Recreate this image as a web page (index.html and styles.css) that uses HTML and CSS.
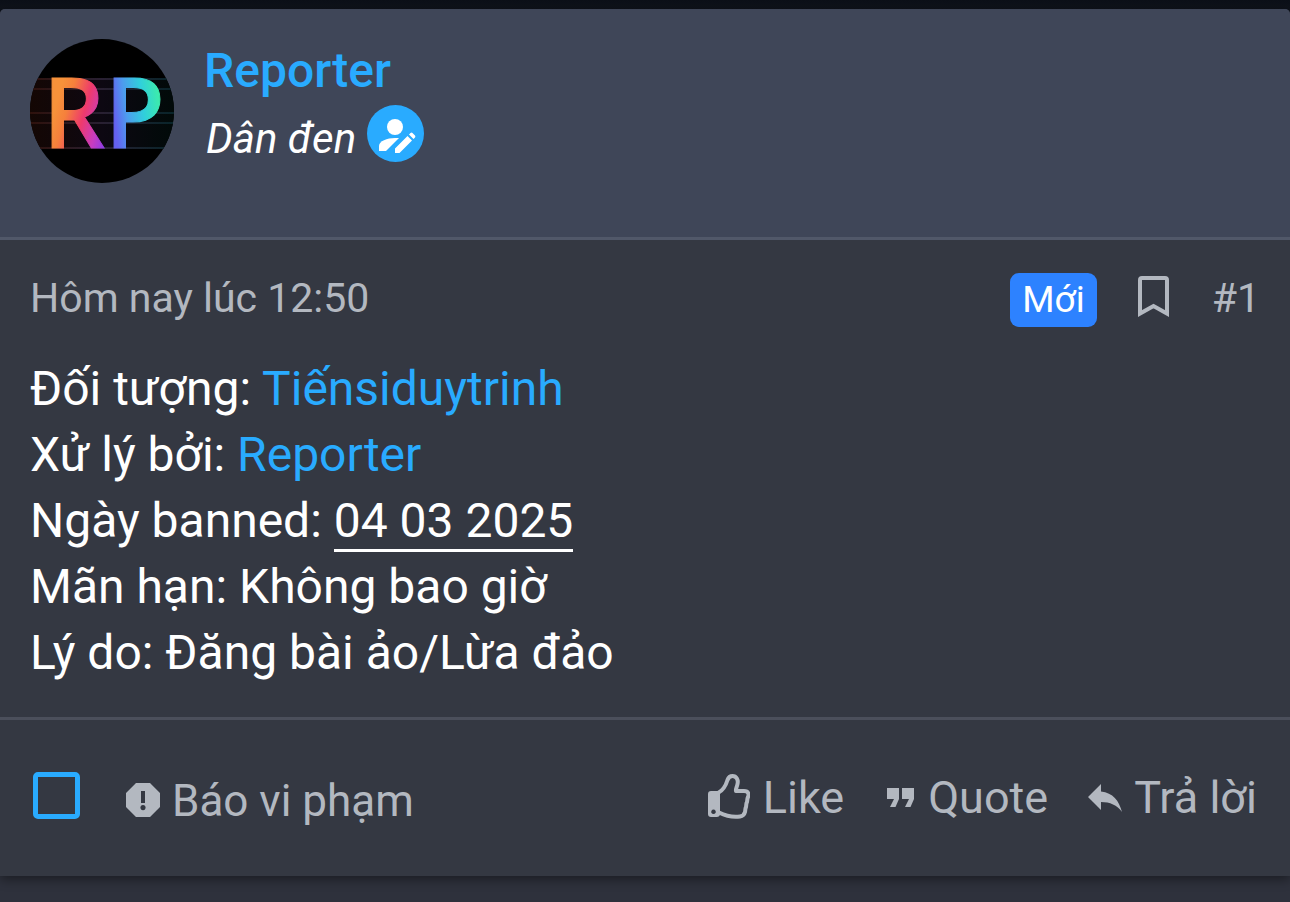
FILE: index.html
```html
<!DOCTYPE html>
<html lang="vi">
<head>
<meta charset="utf-8">
<meta name="viewport" content="width=device-width, initial-scale=1">
<title>Reporter</title>
<link rel="stylesheet" href="styles.css">
</head>
<body>
<main class="thread">
  <article class="post">
    <header class="post-user">
      <a class="avatar" href="#user" aria-label="Reporter">
        <svg viewBox="0 0 144 144" aria-hidden="true">
          <defs>
            <linearGradient id="warm" gradientUnits="userSpaceOnUse" x1="22" y1="80" x2="78" y2="96">
              <stop offset="0" stop-color="#f7923a"/>
              <stop offset=".2" stop-color="#f5803c"/>
              <stop offset=".5" stop-color="#ee3a6c"/>
              <stop offset=".78" stop-color="#c83cc0"/>
              <stop offset="1" stop-color="#8b3de8"/>
            </linearGradient>
            <linearGradient id="cool" gradientUnits="userSpaceOnUse" x1="84" y1="78" x2="130" y2="72">
              <stop offset="0" stop-color="#6461f0"/>
              <stop offset=".28" stop-color="#4d9cee"/>
              <stop offset=".65" stop-color="#30cfdc"/>
              <stop offset="1" stop-color="#3ceaae"/>
            </linearGradient>
            <linearGradient id="band">
              <stop offset="0" stop-color="#140704"/>
              <stop offset=".5" stop-color="#0d0812"/>
              <stop offset="1" stop-color="#010a09"/>
            </linearGradient>
            <linearGradient id="scan" gradientUnits="userSpaceOnUse" x1="0" y1="0" x2="144" y2="0">
              <stop offset="0" stop-color="#3a1610"/>
              <stop offset=".5" stop-color="#352a40"/>
              <stop offset="1" stop-color="#0b3038"/>
            </linearGradient>
          </defs>
          <rect width="144" height="144" fill="#000"/>
          <rect y="39" width="144" height="71" fill="url(#band)"/>
          <path d="M0 40h144M0 50h144M0 74h144M0 84h144M0 109h144" fill="none" stroke="url(#scan)" stroke-width="2" opacity=".7"/>
          <g class="avatar-letters">
            <text x="13" y="109" fill="url(#warm)" stroke="url(#warm)">R</text>
            <text x="75" y="109" fill="url(#cool)" stroke="url(#cool)">P</text>
          </g>
        </svg>
      </a>
      <div class="user-text">
        <h2 class="user-name"><a href="#user">Reporter</a></h2>
        <div class="user-title">
          <em>Dân đen</em>
          <svg class="role-icon" viewBox="0 0 57 57" role="img" aria-label="Thread starter">
            <circle cx="28.500" cy="28.500" r="28.500" fill="#29abff"/>
            <g fill="#fff">
              <circle cx="28" cy="22" r="8"/>
              <path d="M12 46v-5c0-5 8-8 16-8h4L19 46z"/>
              <path d="M28 48v-4.500l12.500-12.500 4.500 4.500L32.500 48zM42 29.500l1.500-1.500q1-.8 2 0l2.500 2.500q.8 1 0 2L46.500 34z"/>
            </g>
          </svg>
        </div>
      </div>
    </header>

    <div class="post-main">
      <div class="post-meta">
        <a class="post-time" href="#post-1"><time>Hôm nay lúc 12:50</time></a>
        <span class="badge">Mới</span>
        <button class="bookmark" type="button" aria-label="Bookmark">
          <svg viewBox="0 0 31 41" aria-hidden="true"><path d="M2 37.500V4q0-2 2-2h23q2 0 2 2v33.500L15.500 30z" fill="none" stroke="currentColor" stroke-width="4"/></svg>
        </button>
        <a class="post-number" href="#post-1">#1</a>
      </div>
      <div class="post-content">
        <p>Đối tượng: <a href="#target">Tiếnsiduytrinh</a></p>
        <p>Xử lý bởi: <a href="#user">Reporter</a></p>
        <p>Ngày banned: <span class="date">04 03 2025</span></p>
        <p>Mãn hạn: Không bao giờ</p>
        <p>Lý do: Đăng bài ảo/Lừa đảo</p>
      </div>
    </div>

    <footer class="post-footer">
      <input class="select-post" type="checkbox" aria-label="Select post">
      <a class="action report" href="#report">
        <svg class="icon-report" viewBox="0 0 34 34" aria-hidden="true"><path fill="currentColor" fill-rule="evenodd" d="M10 0h14l10 10v14L24 34H10L0 24V10zM15 8v12h4V8zM17 22a2.600 2.600 0 1 0 .01 0z"/></svg>
        Báo vi phạm
      </a>
      <nav class="actions" aria-label="Post actions">
        <a class="action like" href="#like">
          <svg class="icon-like" viewBox="0 0 42 45" aria-hidden="true">
            <path fill="currentColor" fill-rule="evenodd" d="M3 17h9V41q-1 2-3 2H3q-3 0-3-3V20q0-3 3-3zM5.500 35.500a2.300 2.300 0 1 0 .01 0z"/>
            <path fill="none" stroke="currentColor" stroke-width="4" stroke-linejoin="round" d="M10 19c6-3 8-8 9.500-13 1-3 3-4 5-4 4 0 6 4 5 8-.5 3-2 5-1.500 7h8c5 0 5 4 4 6-1 2-.5 3-1 5-1.200 2-.5 3-1 5-1 2-.5 3-1 5-.8 3-2 4-5 4.500-8 1.200-15-1-21-4"/>
          </svg>
          Like
        </a>
        <a class="action quote" href="#quote">
          <svg class="icon-quote" viewBox="0 0 27 19" aria-hidden="true"><path fill="currentColor" d="M0 0h12v11L8.500 19H3l4-8H0zM15 0h12v11l-3.500 8H18l4-8h-7z"/></svg>
          Quote
        </a>
        <a class="action reply" href="#reply">
          <svg class="icon-reply" viewBox="0 0 34 28" aria-hidden="true"><path fill="currentColor" d="M0 13L13 0v7.500c12 1.500 18 9 21 20.500-5-7-12-10-21-10v8z"/></svg>
          Trả lời
        </a>
      </nav>
    </footer>
  </article>
</main>
</body>
</html>
```
FILE: styles.css
```css
* { box-sizing: border-box; }

body {
  margin: 0;
  min-height: 100vh;
  background: #2e313c;
  color: #fff;
  font-family: Roboto, "Noto Sans", sans-serif;
  font-size: 48px;
  line-height: 66px;
}

a { color: #29abff; text-decoration: none; }
svg { display: block; flex: none; }
h2, p { margin: 0; }

.thread {
  padding-top: 9px;
  background: linear-gradient(#0c1018, #11151e) top / 100% 15px no-repeat;
}

.post {
  background: #343842;
  border-radius: 5px 5px 0 0;
  box-shadow: 0 3px 12px rgba(0, 0, 0, .45);
}

.post-user {
  display: flex;
  gap: 30px;
  padding: 30px 30px 54px;
  background: #3f4658;
  border-bottom: 3px solid #515869;
  border-radius: 5px 5px 0 0;
}

.avatar { flex: none; width: 144px; height: 144px; border-radius: 50%; overflow: hidden; }
.avatar-letters {
  font-family: "Open Sans", "Noto Sans", sans-serif;
  font-size: 97px;
  font-weight: 600;
  stroke-width: 1px;
}

.user-name { font-size: 48px; font-weight: 500; line-height: 64px; }
.user-title { display: flex; gap: 11px; padding: 2px 0 0 2px; font-size: 42px; line-height: 68px; }
.role-icon { width: 57px; height: 57px; }

.post-main { padding: 31px 30px; }
.post-meta { display: flex; align-items: baseline; font-size: 41px; line-height: 54px; }
.post-time, .post-number, .action, .bookmark { color: #b3b8c0; }
.post-time { margin-right: auto; }
.badge {
  padding: 0 12px;
  border-radius: 9px;
  background: #2d82ff;
  font-size: 37px;
}
.bookmark {
  align-self: flex-start;
  margin: 5px 43px 0 41px;
  padding: 0;
  border: 0;
  background: none;
}
.bookmark svg { width: 31px; height: 41px; }

.post-content { margin-top: 29px; }
.date { border-bottom: 3px solid; }

.post-footer {
  display: flex;
  align-items: flex-start;
  padding: 52px 33px 51px;
  border-top: 3px solid #4b4f5b;
  font-size: 45px;
  line-height: 48px;
}
.select-post {
  appearance: none;
  width: 47px;
  height: 47px;
  margin: 0 46px 0 0;
  border: 5px solid #29abff;
  border-radius: 5px;
}
.select-post:checked { background: #29abff; }
.action { display: flex; align-items: center; }
.report { gap: 12px; padding-top: 5px; font-size: 44px; }
.actions { display: flex; gap: 40px; margin-left: auto; padding-top: 2px; }
.like { gap: 13px; margin-right: 3px; }
.quote { gap: 14px; }
.reply { gap: 12px; }
.icon-report { width: 34px; height: 34px; margin-bottom: 3px; }
.icon-like { width: 42px; height: 45px; margin-bottom: 3px; }
.icon-quote { width: 27px; height: 19px; margin-bottom: 2px; }
.icon-reply { width: 34px; height: 28px; }
```
